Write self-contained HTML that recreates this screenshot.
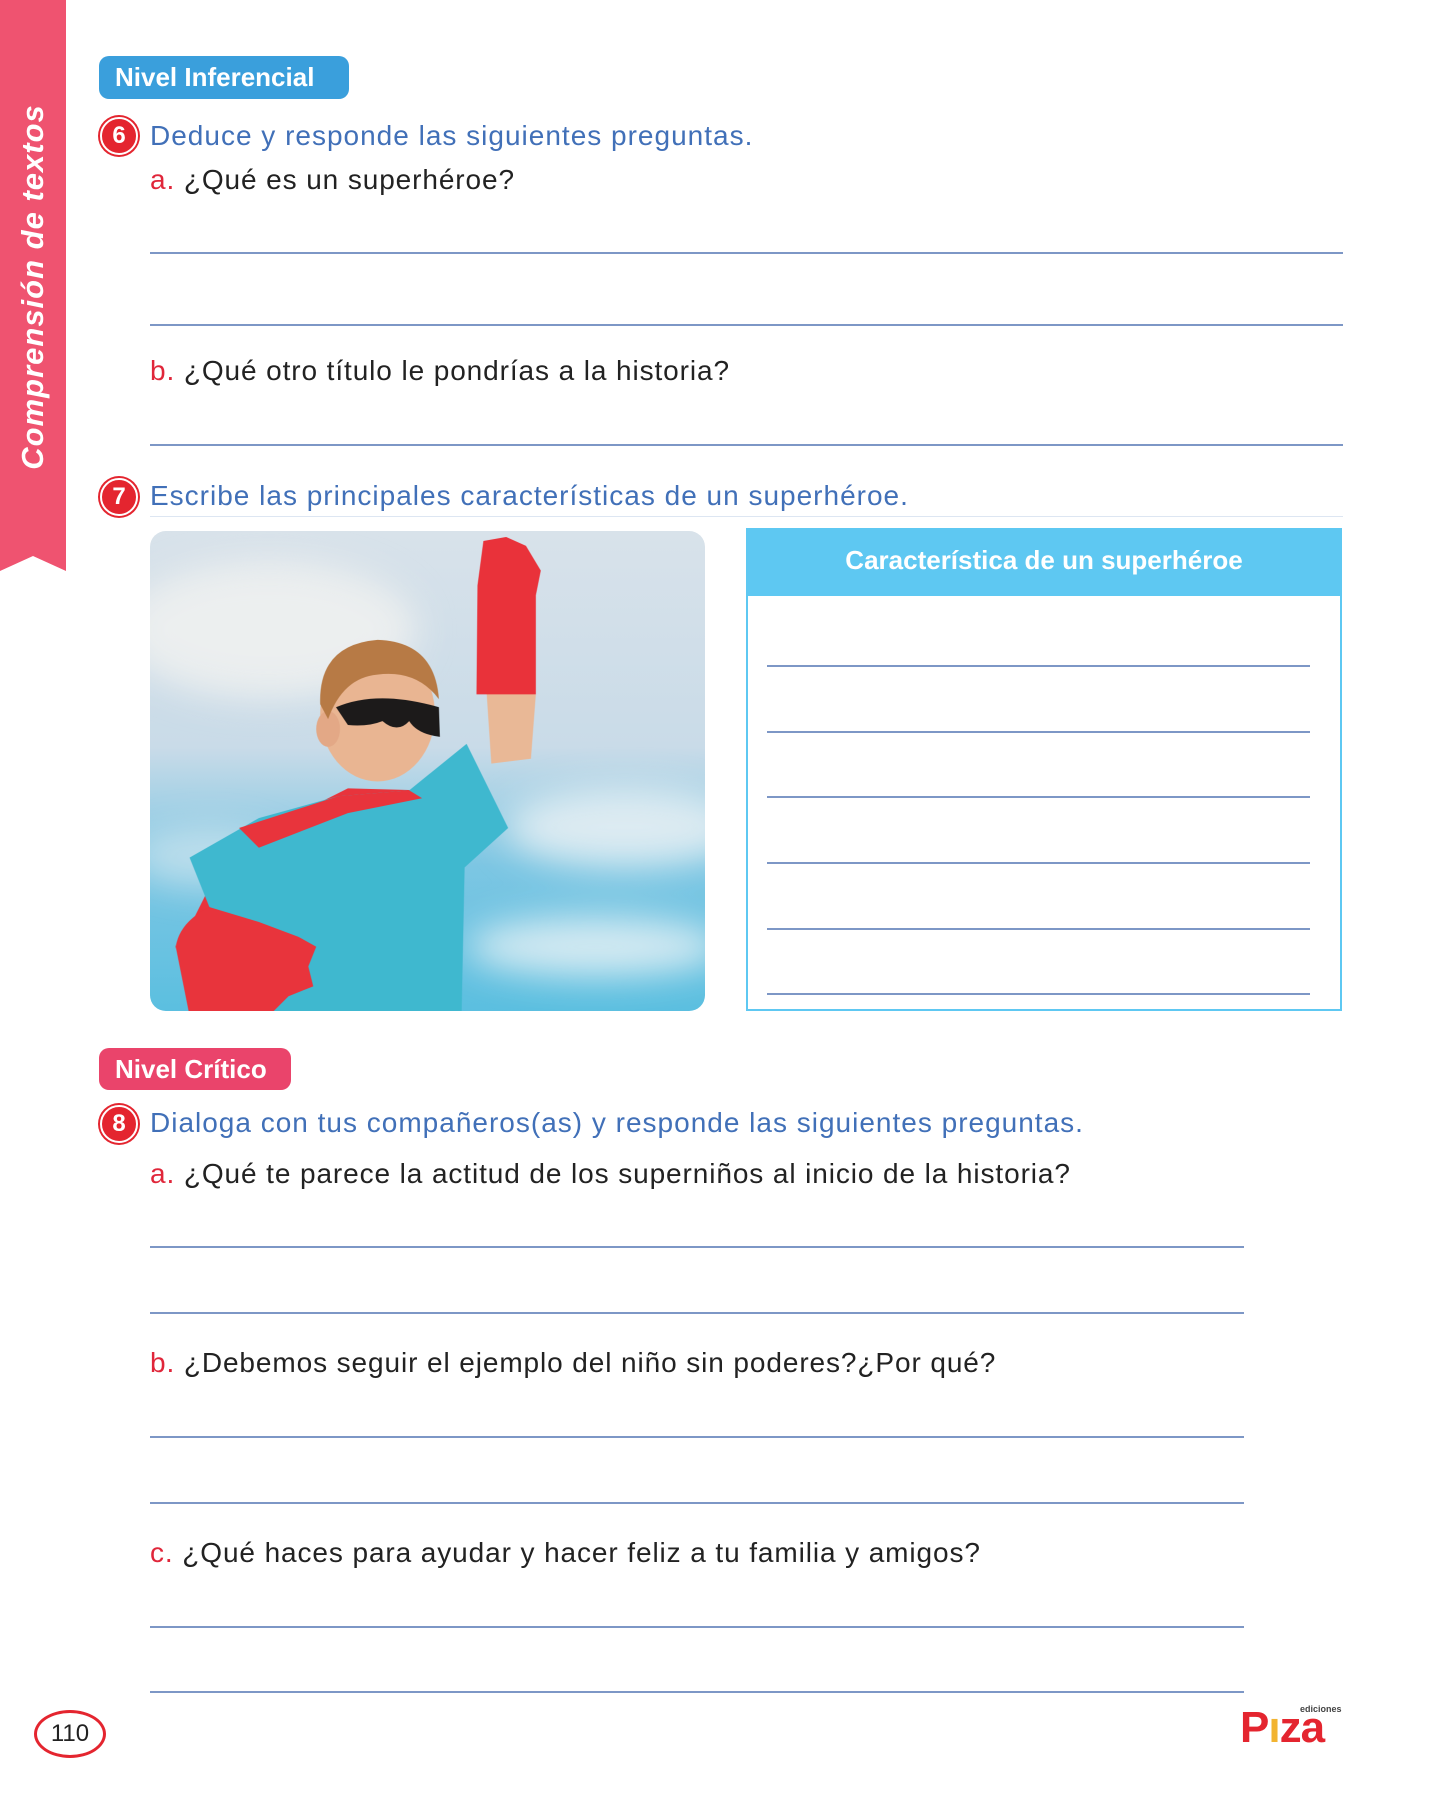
<!DOCTYPE html>
<html><head><meta charset="utf-8"><style>
*{margin:0;padding:0;box-sizing:border-box}
body{width:1439px;height:1800px;position:relative;background:#fff;font-family:"Liberation Sans",sans-serif;overflow:hidden}
.a{position:absolute}
.t{position:absolute;line-height:34px;height:34px;white-space:nowrap}
.ins{font-size:28px;color:#4170b8;letter-spacing:1px}
.q{font-size:28px;color:#222;letter-spacing:0.9px}
.q b{color:#e0263a;font-weight:normal}
.ln{position:absolute;height:2px;background:#7d97c6}
.num{position:absolute;width:38px;height:38px;border-radius:50%;background:#e4252f;border:2px solid #fff;box-shadow:0 0 0 2px #e4252f;color:#fff;font-weight:bold;font-size:24px;line-height:34px;text-align:center}
.badge{position:absolute;color:#fff;font-weight:bold;font-size:26px;border-radius:10px;line-height:42px;padding-left:16px}
</style></head><body>
<div class="a" style="left:0;top:0;width:66px;height:571px;background:#ef5370;clip-path:polygon(0 0,100% 0,100% 100%,50% 556px,0 100%)"></div>
<div class="a" style="left:33px;top:287px;transform:translate(-50%,-50%) rotate(-90deg);color:#fff;font-weight:bold;font-style:italic;font-size:31px;white-space:nowrap;letter-spacing:1px">Comprensión de textos</div>

<div class="badge" style="left:99px;top:56px;width:250px;height:43px;background:#3a9fdc">Nivel Inferencial</div>
<div class="num" style="left:100px;top:117px">6</div>
<div class="t ins" style="left:150px;top:119px">Deduce y responde las siguientes preguntas.</div>
<div class="t q" style="left:150px;top:163px"><b>a.</b> ¿Qué es un superhéroe?</div>
<div class="ln" style="left:150px;width:1193px;top:252px"></div>
<div class="ln" style="left:150px;width:1193px;top:324px"></div>
<div class="t q" style="left:150px;top:354px"><b>b.</b> ¿Qué otro título le pondrías a la historia?</div>
<div class="ln" style="left:150px;width:1193px;top:444px"></div>

<div class="num" style="left:100px;top:478px">7</div>
<div class="t ins" style="left:150px;top:479px">Escribe las principales características de un superhéroe.</div>
<div class="a" style="left:150px;width:1193px;top:516px;height:1px;background:#dde6f2"></div>

<svg class="a" style="left:150px;top:531px" width="555" height="480" viewBox="0 0 561 485" preserveAspectRatio="none">
<defs>
<linearGradient id="sky" x1="0" y1="0" x2="0" y2="1"><stop offset="0" stop-color="#d8e2ea"/><stop offset=".45" stop-color="#c9dbe8"/><stop offset=".7" stop-color="#7cc6e3"/><stop offset="1" stop-color="#5bbfe0"/></linearGradient>
<clipPath id="c"><rect width="561" height="485" rx="16"/></clipPath>
<filter id="bl"><feGaussianBlur stdDeviation="18"/></filter>
</defs>
<g clip-path="url(#c)">
<rect width="561" height="485" fill="url(#sky)"/>
<g filter="url(#bl)">
<ellipse cx="120" cy="100" rx="150" ry="70" fill="#f2f2f0" opacity=".8"/>
<ellipse cx="480" cy="300" rx="120" ry="40" fill="#eef3f5" opacity=".8"/>
<ellipse cx="450" cy="420" rx="130" ry="30" fill="#eef4f6" opacity=".8"/>
<ellipse cx="60" cy="330" rx="80" ry="30" fill="#e2ecf1" opacity=".6"/>
</g>
<path d="M45 485 L40 400 L70 340 L120 300 L200 260 L275 262 L240 300 L130 330 L110 485Z" fill="#e8343c"/>
<path d="M340 160 L390 165 L385 230 L345 235Z" fill="#e9b896"/>
<path d="M40 330 L110 290 L190 268 L262 262 L320 215 L362 300 L318 340 L315 485 L100 485 L100 400 L60 380Z" fill="#3fb8cf"/>
<path d="M90 300 L190 268 L262 262 L275 270 L200 285 L110 320Z" fill="#e8343c"/>
<path d="M331 55 L337 10 L360 6 L380 15 L395 40 L390 65 L390 165 L330 165Z" fill="#e9323a"/>
<ellipse cx="230" cy="185" rx="58" ry="68" fill="#e9b592"/>
<ellipse cx="180" cy="200" rx="12" ry="18" fill="#e3a886"/>
<path d="M172 175 Q170 115 230 110 Q288 112 292 170 Q270 140 230 145 Q195 148 180 190Z" fill="#b77a45"/>
<path d="M188 178 Q230 160 292 178 L293 208 Q270 205 262 192 Q250 205 235 192 Q220 198 200 196Z" fill="#1c1a1a"/>
<path d="M26 420 Q30 395 60 380 L110 395 L150 410 L168 420 L160 440 L165 460 L140 470 L120 490 L40 490Z" fill="#e8343c"/>
</g>
</svg>

<div class="a" style="left:746px;top:528px;width:596px;height:483px;border:2px solid #5ec8f2"></div>
<div class="a" style="left:746px;top:528px;width:596px;height:68px;background:#5ec8f2;color:#fff;font-weight:bold;font-size:26px;line-height:64px;text-align:center">Característica de un superhéroe</div>
<div class="ln" style="left:767px;width:543px;top:665px"></div>
<div class="ln" style="left:767px;width:543px;top:731px"></div>
<div class="ln" style="left:767px;width:543px;top:796px"></div>
<div class="ln" style="left:767px;width:543px;top:862px"></div>
<div class="ln" style="left:767px;width:543px;top:928px"></div>
<div class="ln" style="left:767px;width:543px;top:993px"></div>

<div class="badge" style="left:99px;top:1048px;width:192px;height:42px;background:#ea446b">Nivel Crítico</div>
<div class="num" style="left:100px;top:1105px">8</div>
<div class="t ins" style="left:150px;top:1106px">Dialoga con tus compañeros(as) y responde las siguientes preguntas.</div>
<div class="t q" style="left:150px;top:1157px"><b>a.</b> ¿Qué te parece la actitud de los superniños al inicio de la historia?</div>
<div class="ln" style="left:150px;width:1094px;top:1246px"></div>
<div class="ln" style="left:150px;width:1094px;top:1312px"></div>
<div class="t q" style="left:150px;top:1346px"><b>b.</b> ¿Debemos seguir el ejemplo del niño sin poderes?¿Por qué?</div>
<div class="ln" style="left:150px;width:1094px;top:1436px"></div>
<div class="ln" style="left:150px;width:1094px;top:1502px"></div>
<div class="t q" style="left:150px;top:1536px"><b>c.</b> ¿Qué haces para ayudar y hacer feliz a tu familia y amigos?</div>
<div class="ln" style="left:150px;width:1094px;top:1626px"></div>
<div class="ln" style="left:150px;width:1094px;top:1691px"></div>

<div class="a" style="left:34px;top:1710px;width:72px;height:48px;border:3.5px solid #e4252f;border-radius:50%;font-size:24px;line-height:41px;text-align:center;color:#222">110</div>
<div class="a" style="left:1240px;top:1704px;width:110px;height:50px">
<div class="a" style="left:60px;top:0;font-size:9px;font-weight:bold;color:#444">ediciones</div>
<div class="a" style="left:0;top:2px;font-size:44px;font-weight:bold;color:#e4252f;line-height:44px;letter-spacing:-1px">P<span style="color:#f2b431">ı</span>za</div>
</div>
</body></html>
